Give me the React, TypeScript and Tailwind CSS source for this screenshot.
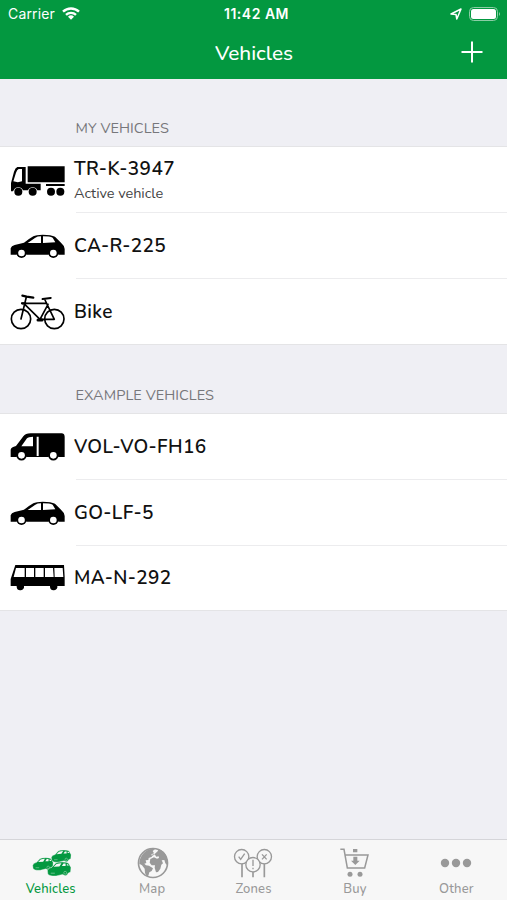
import type { ReactNode } from 'react';

const textFont = "font-[Nunito,Lato,'Open_Sans',sans-serif]";

function IconTruck() {
  return (
    <svg className="mt-[1px] h-[32px] w-[56px]" viewBox="30 41 168 96">
      <path d="M83 45h111v48H83z" />
      <path
        fillRule="evenodd"
        d="M52 47h25v50h45v20h-10a15 15 0 0 0-28 0h-15a15 15 0 0 0-28 0l-2 3h-6V95l9-34q4-12 10-14zM56 53q-5 2-8 11l-8 26q14 5 26 0V53z"
      />
      <path d="M138 98h56v6h-56z" />
      <circle cx="55" cy="121" r="12" />
      <circle cx="98" cy="121" r="12" />
      <circle cx="153" cy="121" r="12" />
      <circle cx="181" cy="121" r="12" />
    </svg>
  );
}

function IconCar() {
  return (
    <svg className="h-[26px] w-[56px]" viewBox="30 247 168 78">
      <path d="M32 312v-19q2-7 12-10l28-7q16-12 28-19 8-5 28-5 26 0 37 6l18 18q9 7 11 19v17h-19a15 15 0 0 0-29 0H79a15 15 0 0 0-29 0z" />
      <path fill="#fff" d="M83 277l23-16q6-4 17-4v20zM129 257q21 0 29 4l8 14-37 2z" />
      <circle cx="64.500" cy="307" r="15" />
      <circle cx="160" cy="307" r="15" />
      <circle cx="64.500" cy="307" r="10" fill="#fff" />
      <circle cx="160" cy="307" r="10" fill="#fff" />
    </svg>
  );
}

function IconBike() {
  return (
    <svg
      className="h-[36px] w-[56px]"
      viewBox="30 41 168 108"
      fill="none"
      stroke="#000"
      strokeWidth="5"
      strokeLinecap="round"
      strokeLinejoin="round"
    >
      <circle cx="63" cy="116" r="29" />
      <circle cx="163" cy="116" r="29" />
      <path d="M63 116l16-66M66 69h73M75 73l45 44h43l-28-58M144 72l-24 45" />
      <path strokeWidth="6.500" d="M67 46l13 3 20 3M66 69h10M128 56l24-3" />
      <path d="M114 119h12" strokeWidth="9" />
    </svg>
  );
}

function IconVan() {
  return (
    <svg className="h-[30px] w-[56px]" viewBox="30 33 168 90">
      <path d="M32 108V86q1-7 16-11l22-29q6-9 22-9h93q8 0 9 10v61h-19a15 15 0 0 0-29 0H79a15 15 0 0 0-29 0z" />
      <path fill="#fff" d="M64 76l17-24q4-5 18-5v29zM110 47h6v58h-6z" />
      <circle cx="64.500" cy="103" r="15.500" />
      <circle cx="160" cy="103" r="15.500" />
      <circle cx="64.500" cy="103" r="10" fill="#fff" />
      <circle cx="160" cy="103" r="10" fill="#fff" />
    </svg>
  );
}

function IconBus() {
  return (
    <svg className="h-[28px] w-[56px]" viewBox="30 72 168 84">
      <path d="M46 75h146l2 35v28h-22a11 11 0 0 1-22 3v-3H72a11 11 0 0 1-22 3v-3H32v-21z" />
      <path
        fill="#fff"
        d="M48 84h26v27H41zM78 84h24v27H78zM106 84h25v27h-25zM135 84h24l2 27h-26zM163 84h25l2 27h-26z"
      />
    </svg>
  );
}

function TabCar({ transform }: { transform: string }) {
  return (
    <g transform={transform}>
      <path
        d="M2 30l-1-9q2-6 11-8l9-10q4-3 16-3 11 0 15 3l6 11-1 11-6 3q-2 7-8 6l-5-3-16 4q-16 1-20-5z"
        stroke="#f7f7f7"
        strokeWidth="1"
      />
      <path fill="#f7f7f7" d="M16 12l7-7q6-2 12-2l-5 8zM36 10l4-6h5v6zM48 9V5l3 1 2 3z" />
      <path fill="none" stroke="#f7f7f7" strokeWidth="1" d="M9 28h10" />
      <circle cx="44" cy="27" r="3.500" fill="none" stroke="#f7f7f7" strokeWidth="0.900" />
    </g>
  );
}

function IconVehicles() {
  return (
    <svg className="ml-[2px] h-[28px] w-[40px]" viewBox="94 41 120 84" fill="currentColor">
      <TabCar transform="translate(151 44) scale(1.040)" />
      <TabCar transform="translate(95 67) scale(1.080)" />
      <TabCar transform="translate(139 80) scale(1.240 1.200)" />
    </svg>
  );
}

function IconGlobe() {
  return (
    <svg className="ml-[2px] h-[32px] w-[32px]" viewBox="412 37 96 96" fill="currentColor">
      <circle cx="460" cy="85" r="43.500" fill="none" stroke="currentColor" strokeWidth="5" />
      <path d="M430 57q12-13 27-15l9 2-7 5 4 7-8 3 2 7-10 4-1 6-8 1 2 8-6 2 5 5 9 1 12 8-4 8-7 4-3 10-5 2-5-10-1-13-8-10-8-5q0-16 11-30z" />
      <path d="M466 57l8-7 3-7q17 6 22 19l4 14-1 15-5-5-3-10-8 1 4 9-5 4-3 12-7 10-6 1-4-14 1-7-10 0-6-8 2-11 11-5 9 4 6-2-1-5-7 1-5-7-6 4-6-1z" />
    </svg>
  );
}

function IconZones() {
  return (
    <svg
      className="h-[30px] w-[40px]"
      viewBox="100 39 120 90"
      fill="none"
      stroke="currentColor"
      strokeWidth="4"
    >
      <path d="M127 86v41M194 86v41M160 110v17" strokeWidth="5" />
      <circle cx="126" cy="65" r="21.500" />
      <circle cx="194" cy="65" r="21.500" />
      <circle cx="160" cy="89" r="21.500" fill="#f7f7f7" />
      <path d="M117 65l6 8 12-17M187 58l14 15M201 58l-14 15M160 74v19M160 98v5" />
    </svg>
  );
}

function IconBuy() {
  return (
    <svg
      className="h-[30px] w-[30px]"
      viewBox="420 40 90 90"
      fill="none"
      stroke="currentColor"
      strokeWidth="4.500"
    >
      <path d="M421 44h11l10 56h52l10-39h-69" />
      <path fill="currentColor" stroke="none" d="M459 43h13v10h-13zM460 66h12v12h7l-13 13-13-13h7z" />
      <circle cx="450" cy="119" r="7.500" fill="currentColor" stroke="none" />
      <circle cx="480" cy="119" r="7.500" fill="currentColor" stroke="none" />
    </svg>
  );
}

function IconOther() {
  return (
    <svg className="h-[10px] w-[32px]" viewBox="0 0 32 10" fill="currentColor">
      <circle cx="5" cy="5" r="4.200" />
      <circle cx="16" cy="5" r="4.200" />
      <circle cx="27" cy="5" r="4.200" />
    </svg>
  );
}

type Vehicle = {
  name: string;
  icon: ReactNode;
  note?: string;
};

const myVehicles: Vehicle[] = [
  { name: 'TR-K-3947', icon: <IconTruck />, note: 'Active vehicle' },
  { name: 'CA-R-225', icon: <IconCar /> },
  { name: 'Bike', icon: <IconBike /> },
];

const exampleVehicles: Vehicle[] = [
  { name: 'VOL-VO-FH16', icon: <IconVan /> },
  { name: 'GO-LF-5', icon: <IconCar /> },
  { name: 'MA-N-292', icon: <IconBus /> },
];

const tabs = [
  { label: 'Vehicles', icon: <IconVehicles />, active: true },
  { label: 'Map', icon: <IconGlobe /> },
  { label: 'Zones', icon: <IconZones /> },
  { label: 'Buy', icon: <IconBuy /> },
  { label: 'Other', icon: <IconOther /> },
];

function VehicleSection({ title, vehicles }: { title: string; vehicles: Vehicle[] }) {
  return (
    <section className="group">
      <h2 className="flex h-[67px] items-end pb-[8px] pl-[75.5px] text-[14.5px] leading-5 tracking-[0.05px] text-[#77777b] group-last:h-[68px]">
        {title}
      </h2>
      <ul className="border-y border-[#e4e4e6] bg-white">
        {vehicles.map((vehicle, i) => (
          <li key={vehicle.name} className="flex h-[66px] last:h-[65px] group-last:last:h-[64px]">
            <div className="flex w-[76px] shrink-0 items-center pl-[10px]">{vehicle.icon}</div>
            <div
              className={`-ml-[2px] flex flex-1 flex-col justify-center ${
                i < vehicles.length - 1
                  ? 'bg-[linear-gradient(#ececee,#ececee)] bg-[length:calc(100%-2px)_1px] bg-[position:right_bottom] bg-no-repeat'
                  : ''
              }`}
            >
              <p
                className={`text-[19px] leading-6 font-semibold tracking-[0.36px] text-[#111] ${
                  vehicle.note ? 'mt-[2px]' : ''
                }`}
              >
                {vehicle.name}
              </p>
              {vehicle.note && (
                <p className="text-[14.5px] leading-[24px] tracking-[-0.05px] text-[#444]">{vehicle.note}</p>
              )}
            </div>
          </li>
        ))}
      </ul>
    </section>
  );
}

export default function App() {
  return (
    <div className={`flex h-[900px] w-[507px] flex-col overflow-hidden bg-[#efeff4] ${textFont}`}>
      <header className="h-[79px] shrink-0 bg-[#039840] text-white">
        <div className="grid h-[27px] grid-cols-3 items-center px-[8px] font-[Inter,sans-serif] text-[14px]">
          <div className="flex items-center gap-[7px]">
            <span className="tracking-[0.15px]">Carrier</span>
            <svg className="h-[13px] w-[18px]" viewBox="0 0 18 13" fill="none" stroke="#fff" strokeWidth="2.400">
              <path d="M1 4.700a11.500 11.500 0 0 1 16 0M4 7.900a7.200 7.200 0 0 1 10 0" />
              <path d="M9 12.700l-3-3a4.300 4.300 0 0 1 6 0z" fill="#fff" stroke="none" />
            </svg>
          </div>
          <span className="pl-[6px] text-center text-[14px] font-semibold tracking-[0.5px] whitespace-nowrap">
            11:42 AM
          </span>
          <div className="flex items-center justify-end gap-[7px]">
            <svg className="h-[12px] w-[12px]" viewBox="0 0 12 12" fill="none" stroke="#fff" strokeWidth="1.500" strokeLinejoin="round">
              <path d="M1 6L11 1 6.800 11 6 6.500z" />
            </svg>
            <svg className="-mr-[2px] h-[14px] w-[32px]" viewBox="0 0 32 14">
              <rect x="0.500" y="0.500" width="28" height="13" rx="4" fill="none" stroke="#8bcda5" />
              <rect x="2" y="2" width="25" height="10" rx="2.500" fill="#fff" />
              <path d="M30 5q2 2 0 4z" fill="#8bcda5" />
            </svg>
          </div>
        </div>
        <div className="grid h-[51px] grid-cols-[1fr_auto_1fr] items-center">
          <span />
          <h1 className="pl-[1px] text-[20.8px] leading-7 font-medium">Vehicles</h1>
          <button type="button" aria-label="Add vehicle" className="mr-[24px] mb-[1px] justify-self-end">
            <svg className="h-[22px] w-[22px]" viewBox="0 0 22 22" stroke="#fff" strokeWidth="2">
              <path d="M11 0.500v21M0.500 11h21" />
            </svg>
          </button>
        </div>
      </header>

      <main className="flex-1">
        <VehicleSection title="MY VEHICLES" vehicles={myVehicles} />
        <VehicleSection title="EXAMPLE VEHICLES" vehicles={exampleVehicles} />
      </main>

      <nav className="grid h-[61px] shrink-0 grid-cols-5 border-t border-[#d5d5d9] bg-[#f7f7f7]">
        {tabs.map((tab) => (
          <a
            key={tab.label}
            className={`flex flex-col items-center pt-[7px] ${tab.active ? 'text-[#039840]' : 'text-[#999]'}`}
          >
            <span className="flex h-[32px] items-center">{tab.icon}</span>
            <span className="mt-[1px] text-[13px] leading-[18px] font-medium tracking-[0.15px]">{tab.label}</span>
          </a>
        ))}
      </nav>
    </div>
  );
}
